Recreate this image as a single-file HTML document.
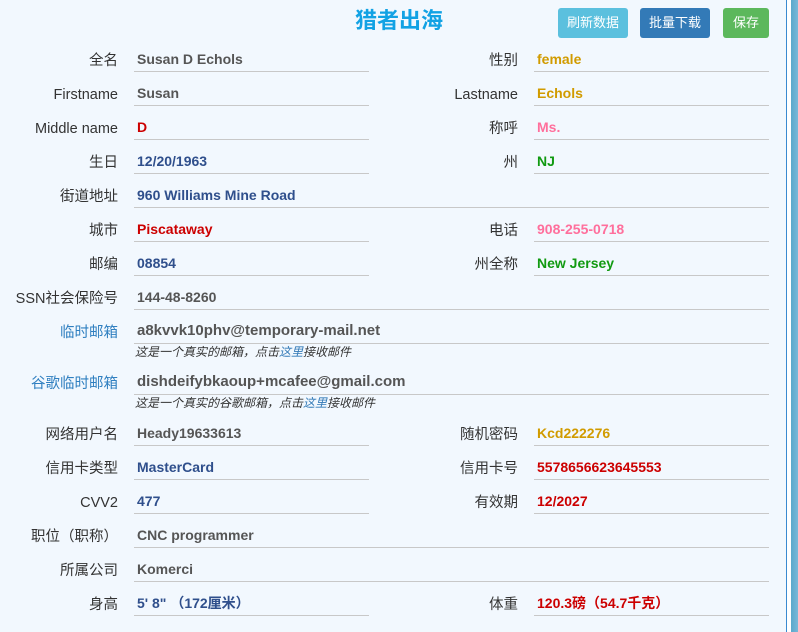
<!DOCTYPE html>
<html><head><meta charset="utf-8"><style>
body{margin:0;width:798px;height:632px;overflow:hidden;background:#f2f8fe;font-family:"Liberation Sans","Noto Sans CJK SC",sans-serif;position:relative}
.l{position:absolute;width:118px;left:0;text-align:right;font-size:14.5px;color:#333;line-height:24px;height:24px;white-space:nowrap;margin-top:3px}
.r{left:400px}
.v{position:absolute;font-size:14px;font-weight:bold;line-height:24px;height:24px;color:#555;white-space:nowrap}
.u{position:absolute;height:1px;background:#c8c8c8}
.n{position:absolute;left:135px;font-size:12px;font-style:italic;color:#333;line-height:14px}
.n span{color:#337ab7}
.b{position:absolute;top:8px;height:30px;line-height:30px;color:#fff;font-size:13px;text-align:center;border-radius:3px}
.g{color:#555}.nv{color:#2f4f8c}.rd{color:#cc0000}.go{color:#d19b00}.pk{color:#ff6f9c}.gr{color:#119a11}
</style></head><body>
<div style="position:absolute;left:0;width:798px;top:8px;text-align:center;font-size:22px;font-weight:bold;color:#12a2e4;line-height:26px">猎者出海</div>
<div class="b" style="left:558px;width:70px;background:#5bc0de">刷新数据</div>
<div class="b" style="left:640px;width:70px;background:#337ab7">批量下载</div>
<div class="b" style="left:723px;width:46px;background:#5cb85c">保存</div>
<div style="position:absolute;left:786px;top:0;width:1px;height:632px;background:#3a8ad0"></div>
<div style="position:absolute;left:787px;top:0;width:4px;height:632px;background:#fff"></div>
<div style="position:absolute;left:791px;top:0;width:7px;height:632px;background:linear-gradient(90deg,#5aa8cc,#78b8d8)"></div>

<div class="l" style="top:46px">全名</div><div class="v g" style="left:137px;top:47px">Susan D Echols</div><div class="u" style="left:134px;width:235px;top:71px"></div>
<div class="l r" style="top:46px">性别</div><div class="v go" style="left:537px;top:47px">female</div><div class="u" style="left:534px;width:235px;top:71px"></div>

<div class="l" style="top:80px">Firstname</div><div class="v g" style="left:137px;top:81px">Susan</div><div class="u" style="left:134px;width:235px;top:105px"></div>
<div class="l r" style="top:80px">Lastname</div><div class="v go" style="left:537px;top:81px">Echols</div><div class="u" style="left:534px;width:235px;top:105px"></div>

<div class="l" style="top:114px">Middle name</div><div class="v rd" style="left:137px;top:115px">D</div><div class="u" style="left:134px;width:235px;top:139px"></div>
<div class="l r" style="top:114px">称呼</div><div class="v pk" style="left:537px;top:115px">Ms.</div><div class="u" style="left:534px;width:235px;top:139px"></div>

<div class="l" style="top:148px">生日</div><div class="v nv" style="left:137px;top:149px">12/20/1963</div><div class="u" style="left:134px;width:235px;top:173px"></div>
<div class="l r" style="top:148px">州</div><div class="v gr" style="left:537px;top:149px">NJ</div><div class="u" style="left:534px;width:235px;top:173px"></div>

<div class="l" style="top:182px">街道地址</div><div class="v nv" style="left:137px;top:183px">960 Williams Mine Road</div><div class="u" style="left:134px;width:635px;top:207px"></div>

<div class="l" style="top:216px">城市</div><div class="v rd" style="left:137px;top:217px">Piscataway</div><div class="u" style="left:134px;width:235px;top:241px"></div>
<div class="l r" style="top:216px">电话</div><div class="v pk" style="left:537px;top:217px">908-255-0718</div><div class="u" style="left:534px;width:235px;top:241px"></div>

<div class="l" style="top:250px">邮编</div><div class="v nv" style="left:137px;top:251px">08854</div><div class="u" style="left:134px;width:235px;top:275px"></div>
<div class="l r" style="top:250px">州全称</div><div class="v gr" style="left:537px;top:251px">New Jersey</div><div class="u" style="left:534px;width:235px;top:275px"></div>

<div class="l" style="top:284px">SSN社会保险号</div><div class="v g" style="left:137px;top:285px">144-48-8260</div><div class="u" style="left:134px;width:635px;top:309px"></div>

<div class="l" style="top:318px;color:#2f7fc0">临时邮箱</div><div class="v g" style="left:137px;top:319px;font-size:15px">a8kvvk10phv@temporary-mail.net</div><div class="u" style="left:134px;width:635px;top:343px"></div>
<div class="n" style="top:345px">这是一个真实的邮箱，点击<span>这里</span>接收邮件</div>

<div class="l" style="top:369px;color:#2f7fc0">谷歌临时邮箱</div><div class="v g" style="left:137px;top:370px;font-size:15px">dishdeifybkaoup+mcafee@gmail.com</div><div class="u" style="left:134px;width:635px;top:394px"></div>
<div class="n" style="top:396px">这是一个真实的谷歌邮箱，点击<span>这里</span>接收邮件</div>

<div class="l" style="top:420px">网络用户名</div><div class="v g" style="left:137px;top:421px">Heady19633613</div><div class="u" style="left:134px;width:235px;top:445px"></div>
<div class="l r" style="top:420px">随机密码</div><div class="v go" style="left:537px;top:421px">Kcd222276</div><div class="u" style="left:534px;width:235px;top:445px"></div>

<div class="l" style="top:454px">信用卡类型</div><div class="v nv" style="left:137px;top:455px">MasterCard</div><div class="u" style="left:134px;width:235px;top:479px"></div>
<div class="l r" style="top:454px">信用卡号</div><div class="v rd" style="left:537px;top:455px">5578656623645553</div><div class="u" style="left:534px;width:235px;top:479px"></div>

<div class="l" style="top:488px">CVV2</div><div class="v nv" style="left:137px;top:489px">477</div><div class="u" style="left:134px;width:235px;top:513px"></div>
<div class="l r" style="top:488px">有效期</div><div class="v rd" style="left:537px;top:489px">12/2027</div><div class="u" style="left:534px;width:235px;top:513px"></div>

<div class="l" style="top:522px">职位（职称）</div><div class="v g" style="left:137px;top:523px">CNC programmer</div><div class="u" style="left:134px;width:635px;top:547px"></div>

<div class="l" style="top:556px">所属公司</div><div class="v g" style="left:137px;top:557px">Komerci</div><div class="u" style="left:134px;width:635px;top:581px"></div>

<div class="l" style="top:590px">身高</div><div class="v nv" style="left:137px;top:591px">5' 8" （172厘米）</div><div class="u" style="left:134px;width:235px;top:615px"></div>
<div class="l r" style="top:590px">体重</div><div class="v rd" style="left:537px;top:591px">120.3磅（54.7千克）</div><div class="u" style="left:534px;width:235px;top:615px"></div>
</body></html>
